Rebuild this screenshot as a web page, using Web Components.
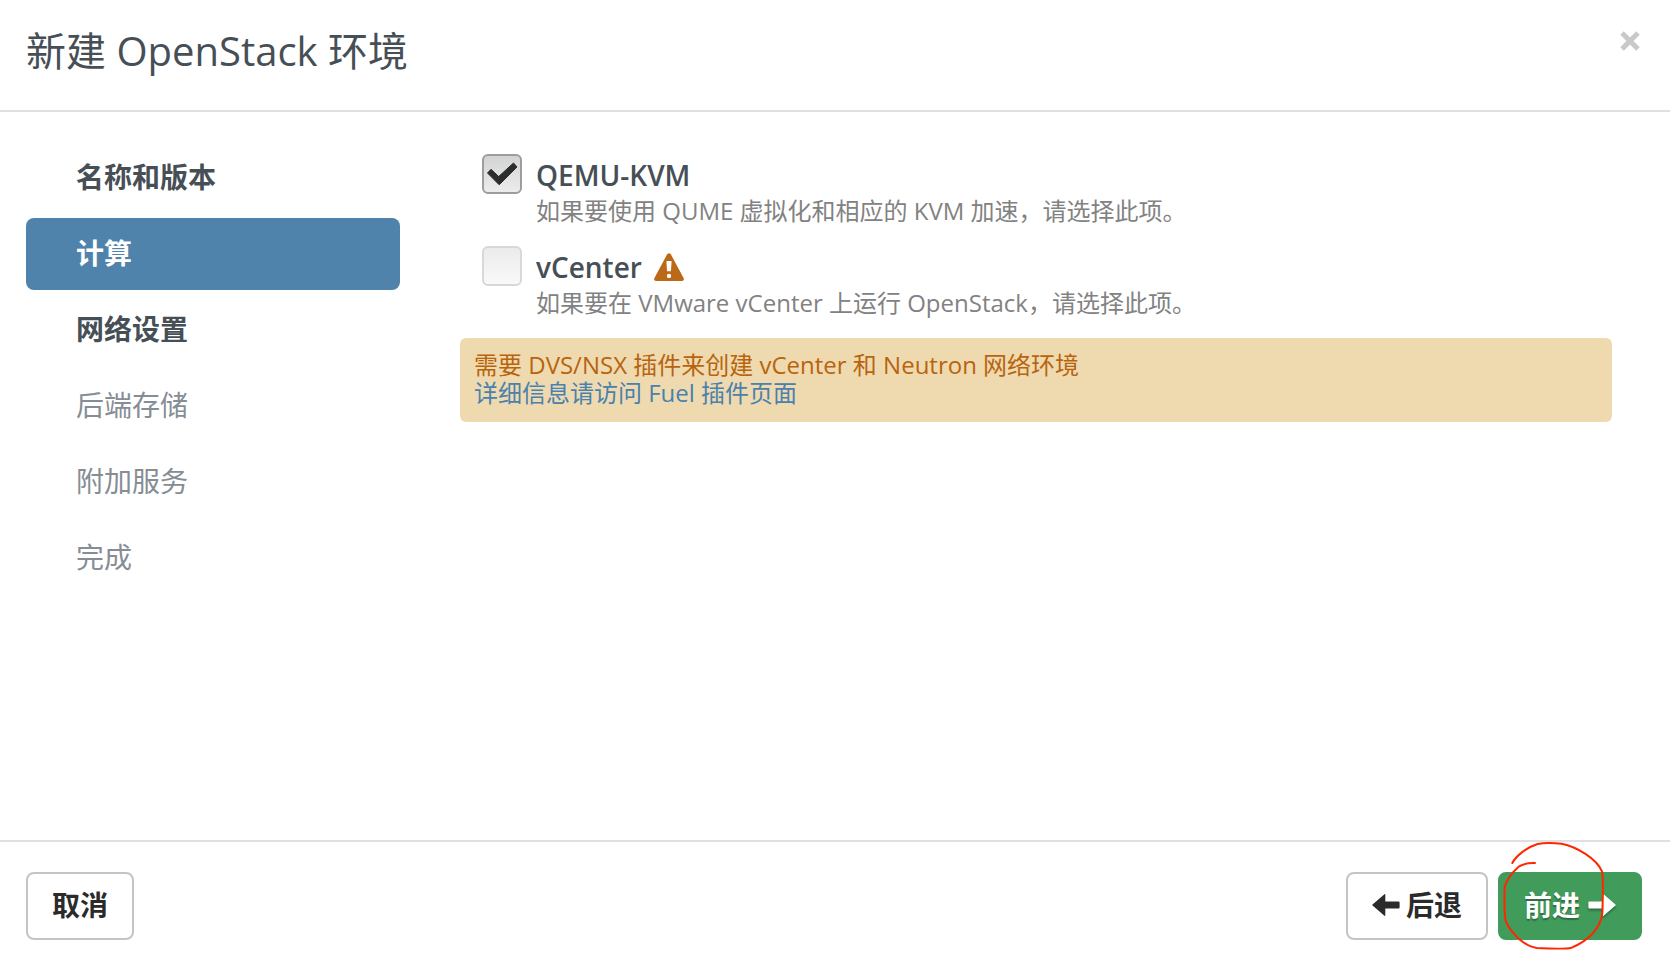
<!DOCTYPE html>
<html lang="zh-CN">
<head>
<meta charset="utf-8">
<title>新建 OpenStack 环境</title>
<style>
  body { margin: 0; background: #fff; color: #474f56; font-family: "Open Sans", "Noto Sans CJK SC", sans-serif; font-size: 24px; line-height: 28px; }
</style>
</head>
<body>
<wizard-dialog>
  <span slot="title">新建 OpenStack 环境</span>
  <wizard-step slot="steps" state="done">名称和版本</wizard-step>
  <wizard-step slot="steps" state="active">计算</wizard-step>
  <wizard-step slot="steps" state="done">网络设置</wizard-step>
  <wizard-step slot="steps" state="locked">后端存储</wizard-step>
  <wizard-step slot="steps" state="locked">附加服务</wizard-step>
  <wizard-step slot="steps" state="locked">完成</wizard-step>

  <option-row checked>QEMU-KVM<span slot="description">如果要使用 QUME 虚拟化和相应的 KVM 加速，请选择此项。</span></option-row>
  <option-row>vCenter<warning-icon slot="badge"></warning-icon><span slot="description">如果要在 VMware vCenter 上运行 OpenStack，请选择此项。</span></option-row>
  <notice-box>需要 DVS/NSX 插件来创建 vCenter 和 Neutron 网络环境<notice-link slot="link" href="#plugins">详细信息请访问 Fuel 插件页面</notice-link></notice-box>

  <action-button slot="cancel">取消</action-button>
  <action-button slot="nav" arrow="left">后退</action-button>
  <action-button slot="nav" arrow="right" kind="success">前进<pen-mark slot="mark"></pen-mark></action-button>
</wizard-dialog>

<script>
  function define(name, html, setup) {
    const template = document.createElement('template');
    template.innerHTML = html;
    customElements.define(name, class extends HTMLElement {
      constructor() {
        super();
        this.attachShadow({ mode: 'open' }).append(template.content.cloneNode(true));
      }
      connectedCallback() {
        if (setup) setup(this, this.shadowRoot);
      }
    });
  }

  define('wizard-dialog', `
    <style>
      :host { display: flex; flex-direction: column; min-height: 100vh; }
      header { display: flex; justify-content: space-between; align-items: flex-start; padding: 23px 28px 31px 26px; border-bottom: 2px solid #e0e0e0; }
      h1 { margin: 0; font-size: 40px; line-height: 56px; font-weight: 400; }
      .close { display: flex; padding: 8px 2px; border: 0; background: none; cursor: pointer; }
      .body { flex: 1; display: flex; gap: 60px; padding: 30px 58px 30px 26px; }
      nav { flex: 0 0 374px; display: flex; flex-direction: column; gap: 4px; }
      main { flex: 1; min-width: 0; padding-top: 12px; }
      footer { display: flex; justify-content: space-between; padding: 30px 28px 20px 26px; border-top: 2px solid #e0e0e0; }
      .group { display: flex; gap: 10px; }
    </style>
    <header>
      <h1><slot name="title"></slot></h1>
      <button class="close" type="button" aria-label="关闭">
        <svg width="20" height="20" viewBox="0 0 20 20"><path d="M3.8 3.8 16.2 16.2M16.2 3.8 3.8 16.2" stroke="#c9c9c9" stroke-width="5" stroke-linecap="square" stroke-linejoin="round" fill="none"/></svg>
      </button>
    </header>
    <div class="body">
      <nav><slot name="steps"></slot></nav>
      <main><slot></slot></main>
    </div>
    <footer>
      <slot name="cancel"></slot>
      <div class="group"><slot name="nav"></slot></div>
    </footer>`);

  define('wizard-step', `
    <style>
      :host { display: block; }
      button { display: block; width: 100%; padding: 15px 50px 17px; border: 0; border-radius: 8px; background: none; color: #474f56; font: 700 28px/40px "Open Sans", "Noto Sans CJK SC", sans-serif; text-align: left; }
      :host([state="active"]) button { background: #5083ab; color: #fff; }
      :host([state="locked"]) button { color: #868d94; font-weight: 400; }
    </style>
    <button type="button"><slot></slot></button>`, (el, root) => {
    const button = root.querySelector('button');
    if (el.getAttribute('state') === 'active') button.setAttribute('aria-current', 'step');
    button.disabled = el.getAttribute('state') === 'locked';
  });

  define('option-row', `
    <style>
      :host { display: block; padding: 0 22px 20px; }
      label { display: grid; grid-template-columns: 40px 1fr; column-gap: 14px; }
      .box { display: grid; grid-row: span 2; align-self: start; }
      input, svg { grid-area: 1 / 1; width: 40px; height: 40px; margin: 0; box-sizing: border-box; }
      input { appearance: none; border: 2px solid #d8d8d8; border-radius: 6px; background: linear-gradient(#ebebeb, #f9f9f9); }
      input:checked { border-color: #9d9d9d; background: linear-gradient(#d2d3d4, #ececec); }
      svg { pointer-events: none; visibility: hidden; }
      input:checked + svg { visibility: visible; }
      .name { display: flex; align-items: center; gap: 12px; padding: 2px 0; font-size: 28px; line-height: 38px; font-weight: 600; }
      .description { line-height: 30px; color: #828282; }
    </style>
    <label>
      <span class="box">
        <input type="checkbox">
        <svg viewBox="0 0 40 40"><path d="M5.5 19 9 15.3 16.7 22.5 31.5 9 35 13 17.2 30.8Z" fill="#2c2c2c" stroke="#2c2c2c" stroke-width="1" stroke-linejoin="round"/></svg>
      </span>
      <span class="name"><span><slot></slot></span><slot name="badge"></slot></span>
      <span class="description"><slot name="description"></slot></span>
    </label>`, (el, root) => {
    root.querySelector('input').checked = el.hasAttribute('checked');
  });

  define('warning-icon', `
    <style>:host { display: flex; } svg { width: 30px; height: 28px; }</style>
    <svg viewBox="0 0 30 28" role="img" aria-label="警告">
      <path d="M13.2 1.2Q15-.9 16.8 1.2L29.7 25.3Q30.4 27.7 28 28H2Q-.4 27.7.3 25.3Z" fill="#bb6817"/>
      <path d="M12.4 8.6Q12.4 8 13 8h4q.6 0 .6.6l-.6 9.1q0 .6-.6.6h-2.8q-.6 0-.6-.6Z" fill="#fff"/>
      <circle cx="15" cy="22.9" r="2.2" fill="#fff"/>
    </svg>`);

  define('notice-box', `
    <style>
      :host { display: block; padding: 13px 14px 15px; border-radius: 6px; background: #efdab0; color: #b8640f; }
      p { margin: 0; }
    </style>
    <p><slot></slot></p>
    <p><slot name="link"></slot></p>`);

  define('notice-link', `
    <style>:host { display: inline; } a { color: #4b81ad; text-decoration: none; }</style>
    <a><slot></slot></a>`, (el, root) => {
    root.querySelector('a').setAttribute('href', el.getAttribute('href'));
  });

  define('action-button', `
    <style>
      :host { display: block; position: relative; }
      button { display: flex; align-items: center; gap: 6px; padding: 11px 24px 13px; border: 2px solid #c4c4c4; border-radius: 8px; background: #fff; color: #2b2b2b; font: 700 28px/40px "Open Sans", "Noto Sans CJK SC", sans-serif; }
      svg { display: none; width: 28px; height: 24px; fill: currentColor; }
      :host([arrow]) svg { display: block; }
      :host([arrow="right"]) button { flex-direction: row-reverse; gap: 8px; }
      :host([arrow="right"]) svg { transform: scaleX(-1); }
      :host([kind="success"]) button { border-color: #419b5b; background: #419b5b; color: #fff; text-shadow: 0 2px 1px rgba(0, 0, 0, .3); }
      :host([kind="success"]) svg { filter: drop-shadow(0 2px 1px rgba(0, 0, 0, .3)); }
    </style>
    <button type="button">
      <svg viewBox="0 0 28 24" aria-hidden="true"><path d="M0 12 12.4 1.2Q13.3.7 13.3 1.8V8.5H26.6Q27.6 8.5 27.6 9.5V14.5Q27.6 15.5 26.6 15.5H13.3V22.2Q13.3 23.3 12.4 22.8Z"/></svg>
      <span><slot></slot></span>
    </button>
    <slot name="mark"></slot>`);

  /* Hand-drawn ring laid over the button it belongs to. */
  define('pen-mark', `
    <style>
      :host { position: absolute; left: 2px; top: -33px; pointer-events: none; }
      svg { display: block; width: 110px; height: 114px; }
    </style>
    <svg viewBox="540 57 330 342" aria-hidden="true" fill="none" stroke="#ff2600" stroke-width="6" stroke-linecap="round" stroke-linejoin="round">
      <path d="M577 129C588 108 620 82 653 72C675 68 700 69 725 71C770 80 830 116 846 154C850 170 849 225 847 280C842 325 805 362 755 383C735 388 690 386 650 384C620 380 582 352 558 306C552 285 553 235 554 200C562 175 580 154 596 140C612 130 628 128 645 129"/>
    </svg>`);
</script>
</body>
</html>
